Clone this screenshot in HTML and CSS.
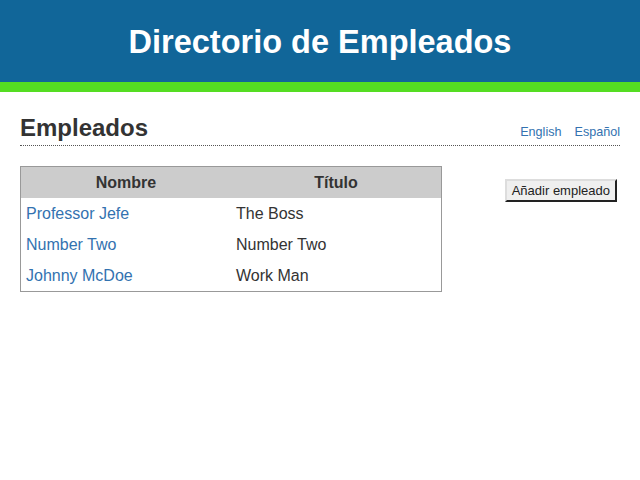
FILE: index.html
```html
<!DOCTYPE html>
<html lang="es">
<head>
<meta charset="utf-8">
<title>Directorio de Empleados</title>
<link rel="stylesheet" href="styles.css">
</head>
<body>
<header class="banner">
  <h1 class="banner-title">Directorio de Empleados</h1>
</header>
<main class="content">
  <div class="section-head">
    <h2 class="section-title">Empleados</h2>
    <nav class="langs">
      <a href="#" class="lang">English</a>
      <a href="#" class="lang">Español</a>
    </nav>
  </div>
  <div class="body-row">
    <table class="emp-table">
      <thead>
        <tr><th>Nombre</th><th>Título</th></tr>
      </thead>
      <tbody>
        <tr><td><a href="#">Professor Jefe</a></td><td>The Boss</td></tr>
        <tr><td><a href="#">Number Two</a></td><td>Number Two</td></tr>
        <tr><td><a href="#">Johnny McDoe</a></td><td>Work Man</td></tr>
      </tbody>
    </table>
    <div class="actions">
      <button class="add-btn" type="button">Añadir empleado</button>
    </div>
  </div>
</main>
</body>
</html>
```
FILE: styles.css
```css
* { box-sizing: border-box; }
html, body { margin: 0; padding: 0; background: #fff; }
body {
  font-family: "Liberation Sans", Arial, sans-serif;
  color: #333;
}
.banner {
  background: #116699;
  border-bottom: 10px solid #55dd22;
  height: 92px;
  display: flex;
  align-items: center;
  justify-content: center;
  padding-top: 2px;
}
.banner-title {
  margin: 0;
  color: #fff;
  font-size: 32.5px;
  font-weight: bold;
  line-height: 1;
}
.content {
  padding: 0 20px;
}
.section-head {
  display: flex;
  align-items: baseline;
  justify-content: space-between;
  border-bottom: 1px dotted #555;
  margin-top: 22px;
  padding-bottom: 3px;
}
.section-title {
  margin: 0;
  font-size: 24px;
  font-weight: bold;
  color: #333;
}
.langs {
  display: flex;
  gap: 13px;
  font-size: 12.6px;
}
.lang, .emp-table a {
  color: #3372b0;
  text-decoration: none;
}
.body-row {
  display: flex;
  justify-content: space-between;
  align-items: flex-start;
  margin-top: 20px;
}
.emp-table {
  width: 422px;
  border: 1px solid #999;
  border-collapse: collapse;
  font-size: 16px;
}
.emp-table th {
  background: #ccc;
  font-weight: bold;
  height: 31px;
  width: 50%;
  text-align: center;
  padding: 2px 5px 0;
}
.emp-table td {
  height: 31px;
  padding: 2px 5px 0;
  text-align: left;
  color: #333;
}
.emp-table tbody tr:last-child td {
  height: 32px;
}
.actions {
  padding-top: 13px;
  padding-right: 3px;
}
.add-btn {
  font-family: "Liberation Sans", Arial, sans-serif;
  font-size: 13px;
  color: #222;
  background: #efefef;
  border: 2px outset #999;
  border-top-color: #ddd;
  border-left-color: #ddd;
  border-right-color: #777;
  border-bottom-color: #777;
  height: 23px;
  padding: 0 5px;
  border-radius: 0;
}
```
